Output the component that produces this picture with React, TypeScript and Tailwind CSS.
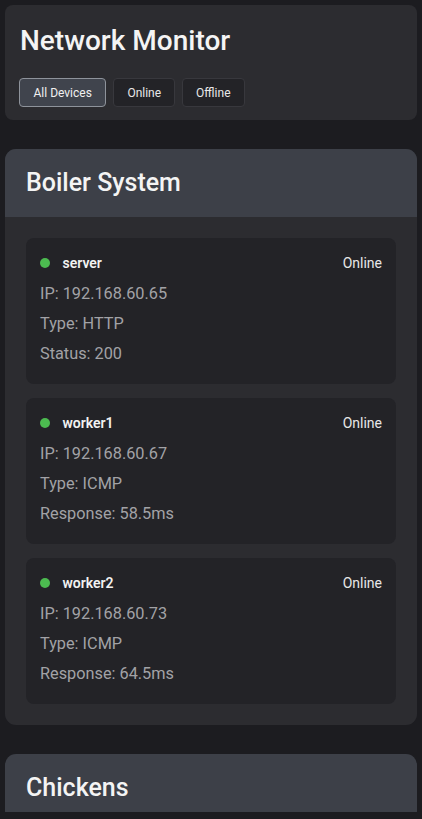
import React from "react";

type Device = { name: string; ip: string; type: string; extra: string };

const boiler: Device[] = [
  { name: "server", ip: "192.168.60.65", type: "HTTP", extra: "Status: 200" },
  { name: "worker1", ip: "192.168.60.67", type: "ICMP", extra: "Response: 58.5ms" },
  { name: "worker2", ip: "192.168.60.73", type: "ICMP", extra: "Response: 64.5ms" },
];

function DeviceCard({ d }: { d: Device }) {
  return (
    <div className="rounded-[8px] bg-[#232327] pl-[13px] pr-[14px] pt-[15px] pb-[15px]">
      <div className="flex h-5 items-center justify-between">
        <div className="flex items-center">
          <span className="mr-[13px] ml-[0.5px] h-[10px] w-[10px] rounded-full bg-[#4cbb50]" />
          <span className="text-[14px] font-semibold text-[#f2f2f2]">{d.name}</span>
        </div>
        <span className="text-[14px] text-[#e8e8e8]">Online</span>
      </div>
      <div className="mt-[6px] ml-[1px] text-[16.3px] leading-[30px] text-[#a2a2a6]">
        <div>IP: {d.ip}</div>
        <div>Type: {d.type}</div>
        <div>{d.extra}</div>
      </div>
    </div>
  );
}

function Section({ title, devices }: { title: string; devices: Device[] }) {
  return (
    <div className="overflow-hidden rounded-[11px] bg-[#2c2c30]">
      <div className="bg-[#3d4048] px-[21px] py-[18px]">
        <h2 className="text-[25px] font-medium leading-[32px] text-[#f4f4f4]">{title}</h2>
      </div>
      {devices.length > 0 && (
        <div className="flex flex-col gap-[14px] p-[21px]">
          {devices.map((d) => (
            <DeviceCard key={d.name} d={d} />
          ))}
        </div>
      )}
    </div>
  );
}

export default function App() {
  return (
    <div
      className="min-h-[819px] bg-[#1c1c20] p-[5px]"
      style={{ fontFamily: "Roboto, 'Noto Sans', sans-serif" }}
    >
      <div className="flex flex-col gap-[29px]">
        <div className="rounded-[8px] bg-[#2c2c30] px-[14px] pt-[19px] pb-[13px]">
          <h1 className="mb-[20px] ml-[1px] text-[28px] font-medium leading-[34px] text-[#f4f4f4]">
            Network Monitor
          </h1>
          <div className="flex gap-[7px]">
            <button className="flex h-[29px] items-center rounded-[4px] border border-[#8e939b] bg-[#40444d] px-[13.5px] text-[12px] text-[#f0f0f0]">
              All Devices
            </button>
            <button className="flex h-[29px] items-center rounded-[4px] border border-[#38383d] bg-[#232327] px-[13px] text-[12px] text-[#e8e8e8]">
              Online
            </button>
            <button className="flex h-[29px] items-center rounded-[4px] border border-[#38383d] bg-[#232327] px-[13px] text-[12px] text-[#e8e8e8]">
              Offline
            </button>
          </div>
        </div>
        <Section title="Boiler System" devices={boiler} />
        <Section title="Chickens" devices={[]} />
      </div>
      <div className="fixed bottom-0 left-0 h-[7px] w-full bg-[#1c1c20]" />
    </div>
  );
}
